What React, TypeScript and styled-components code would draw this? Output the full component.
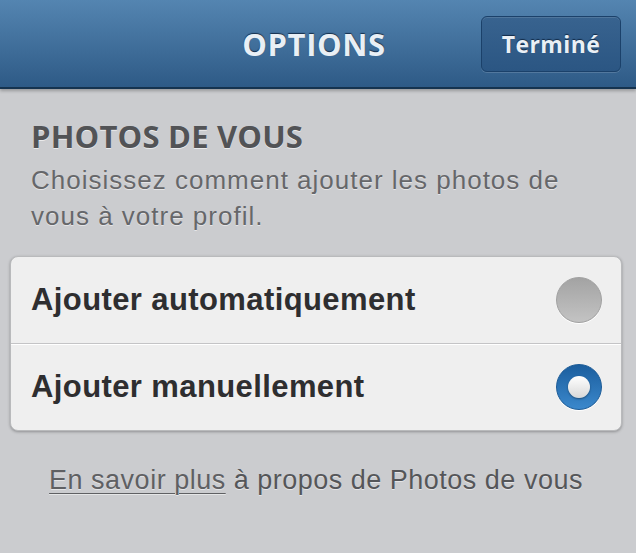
import styled, { createGlobalStyle } from "styled-components";

const GlobalStyle = createGlobalStyle`
  html, body {
    margin: 0;
    padding: 0;
    background: #cbcccf;
  }
  body {
    font-family: "Liberation Sans", Arial, sans-serif;
  }
`;

const Page = styled.div`
  width: 636px;
  height: 553px;
  background: #cbcccf;
  overflow: hidden;
`;

const Header = styled.header`
  position: relative;
  height: 87px;
  display: flex;
  align-items: center;
  justify-content: center;
  background: linear-gradient(#5485b1, #2e5a86);
  border-bottom: 2px solid #15334f;
  box-shadow: 0 2px 3px rgba(0, 0, 0, 0.25);
`;

const Title = styled.h1`
  margin: 0 8px 0 0;
  font-family: "Open Sans", sans-serif;
  font-weight: 700;
  font-size: 31px;
  letter-spacing: 0.6px;
  color: #e9eff5;
  text-shadow: 0 -1px 1px rgba(10, 30, 55, 0.8);
`;

const DoneButton = styled.button`
  position: absolute;
  right: 15px;
  top: 16px;
  width: 140px;
  height: 56px;
  border-radius: 6px;
  border: 1px solid #1b416a;
  background: linear-gradient(#38638f, #2b5683);
  box-shadow: inset 0 1px 0 rgba(255, 255, 255, 0.12), 0 1px 0 rgba(255, 255, 255, 0.15);
  font-family: "Open Sans", sans-serif;
  font-weight: 700;
  font-size: 23px;
  letter-spacing: 0.4px;
  color: #e9eff5;
  text-shadow: 0 -1px 1px rgba(10, 30, 55, 0.8);
  padding: 0;
`;

const Section = styled.section`
  padding: 30px 31px 0;
`;

const SectionTitle = styled.h2`
  margin: 0;
  font-family: "Open Sans", sans-serif;
  font-weight: 700;
  font-size: 31px;
  line-height: 34px;
  letter-spacing: 0.2px;
  color: #525356;
  text-shadow: 0 1px 0 rgba(255, 255, 255, 0.6);
`;

const Description = styled.p`
  margin: 9px 0 0;
  max-width: 570px;
  font-size: 26px;
  line-height: 36px;
  letter-spacing: 1px;
  color: #66676a;
  text-shadow: 0 1px 0 rgba(255, 255, 255, 0.5);
`;

const Card = styled.div`
  margin: 22px 14px 0 10px;
  background: #efefef;
  border: 1px solid #b9babc;
  border-radius: 8px;
  box-shadow: 0 1px 3px rgba(0, 0, 0, 0.3);
`;

const Row = styled.div`
  height: 86px;
  display: flex;
  align-items: center;
  justify-content: space-between;
  padding: 0 19px 0 20px;
  & + & {
    border-top: 1px solid #c4c4c6;
    box-shadow: inset 0 1px 0 #ffffff;
  }
`;

const RowLabel = styled.span`
  font-weight: 700;
  font-size: 31px;
  letter-spacing: 0.4px;
  color: #2e2e30;
`;

const Radio = styled.span<{ $on?: boolean }>`
  width: 46px;
  height: 46px;
  border-radius: 50%;
  display: flex;
  align-items: center;
  justify-content: center;
  box-sizing: border-box;
  background: ${(p) =>
    p.$on
      ? "linear-gradient(#1b5e9e, #3b88cc)"
      : "linear-gradient(#a3a3a3, #c3c3c3)"};
  border: 1px solid ${(p) => (p.$on ? "#1a5a96" : "#a0a0a0")};
  box-shadow: 0 1px 0 #ffffff;
`;

const RadioDot = styled.span`
  width: 22px;
  height: 22px;
  border-radius: 50%;
  background: linear-gradient(#ffffff, #d8d8d8);
  box-shadow: 0 1px 2px rgba(0, 0, 0, 0.4);
`;

const Footer = styled.p`
  margin: 34px 0 0;
  padding-right: 4px;
  text-align: center;
  font-size: 27px;
  letter-spacing: 0.5px;
  color: #555659;
  text-shadow: 0 1px 0 rgba(255, 255, 255, 0.5);
`;

const MoreLink = styled.a`
  color: #5f6063;
  text-decoration: underline;
  text-underline-offset: 4px;
  text-decoration-thickness: 1px;
`;

const options = [
  { label: "Ajouter automatiquement", on: false },
  { label: "Ajouter manuellement", on: true },
];

export default function App() {
  return (
    <Page>
      <GlobalStyle />
      <Header>
        <Title>OPTIONS</Title>
        <DoneButton>Terminé</DoneButton>
      </Header>
      <Section>
        <SectionTitle>PHOTOS DE VOUS</SectionTitle>
        <Description>
          Choisissez comment ajouter les photos de vous à votre profil.
        </Description>
      </Section>
      <Card>
        {options.map((o) => (
          <Row key={o.label}>
            <RowLabel>{o.label}</RowLabel>
            <Radio $on={o.on}>{o.on && <RadioDot />}</Radio>
          </Row>
        ))}
      </Card>
      <Footer>
        <MoreLink>En savoir plus</MoreLink> à propos de Photos de vous
      </Footer>
    </Page>
  );
}
